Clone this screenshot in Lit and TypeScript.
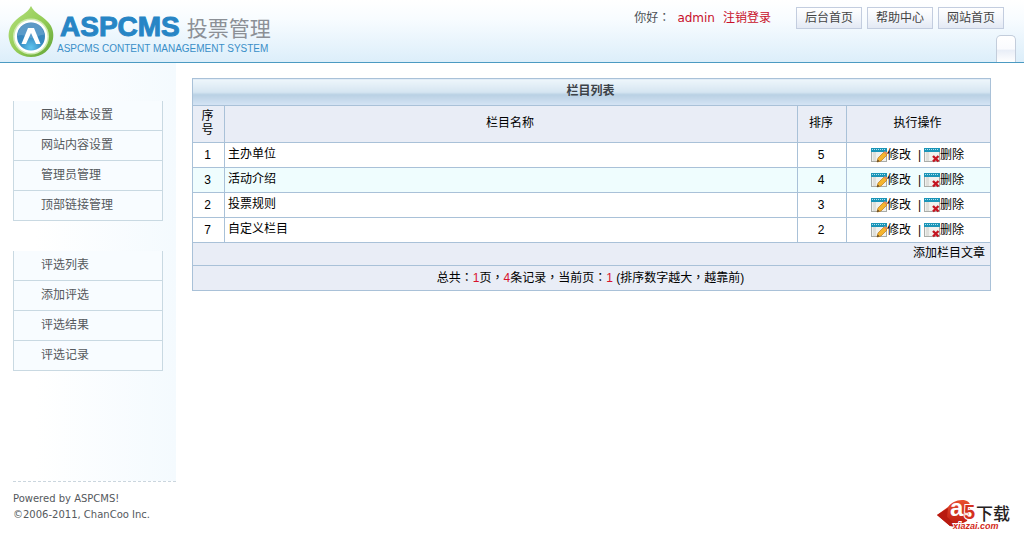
import { LitElement, html, css, svg } from "lit";
import { customElement, property } from "lit/decorators.js";

interface Category {
  id: number;
  name: string;
  order: number;
}

const categories: Category[] = [
  { id: 1, name: "主办单位", order: 5 },
  { id: 3, name: "活动介绍", order: 4 },
  { id: 2, name: "投票规则", order: 3 },
  { id: 7, name: "自定义栏目", order: 2 },
];

const menus: string[][] = [
  ["网站基本设置", "网站内容设置", "管理员管理", "顶部链接管理"],
  ["评选列表", "添加评选", "评选结果", "评选记录"],
];

const windowFrame = svg`
  <rect x="0.5" y="1.5" width="15" height="13" fill="#f0f1ee" stroke="#a9aca8" />
  <rect x="2" y="5" width="3" height="9" fill="#dedfdb" />
  <rect x="0" y="1" width="16" height="4" fill="#1b95b8" />
  <path d="M1 2.5h14" stroke="#b5e4ef" stroke-dasharray="1 1" />`;

@customElement("brand-logo")
class BrandLogo extends LitElement {
  static styles = css`
    :host { display: flex; gap: 3px; }
    .mark { display: block; width: 46px; height: 54px; }
    .name { display: flex; align-items: center; gap: 7px; padding-left: 3px; height: 34px; }
    .words { padding-top: 5px; }
    .product {
      font: bold 28px/34px "Liberation Sans", Arial, sans-serif;
      color: #2785c5;
      -webkit-text-stroke: 1px #2785c5;
    }
    .module { font: 21px/34px "Noto Sans CJK SC", sans-serif; color: #8c9096; }
    .tagline {
      font: 10px/10px "Liberation Sans", Arial, sans-serif;
      color: #3a8fc8;
      white-space: nowrap;
    }
  `;
  render() {
    return html`
      <svg class="mark" viewBox="0 0 46 54" aria-hidden="true">
        <defs>
          <linearGradient id="drop" x1="0" y1="0" x2="1" y2="1">
            <stop offset="0" stop-color="#b4e07c" />
            <stop offset="0.55" stop-color="#92cb55" />
            <stop offset="1" stop-color="#5fa235" />
          </linearGradient>
          <radialGradient id="ball" cx="0.5" cy="0.9" r="0.85">
            <stop offset="0" stop-color="#5fc4ee" />
            <stop offset="0.5" stop-color="#3488c0" />
            <stop offset="1" stop-color="#4284b8" />
          </radialGradient>
        </defs>
        <path d="M23 1C27 9 34 10 40 17C45 22 46 29 45 34C43 45 34 52 23 52S3 45 1 34C0 29 1 22 6 17C12 10 19 9 23 1Z" fill="url(#drop)" />
        <circle cx="23" cy="31.500" r="18" fill="#cfeab0" />
        <circle cx="23" cy="31.500" r="16.500" fill="#fff" />
        <circle cx="23" cy="31.500" r="14" fill="url(#ball)" />
        <path d="M9.500 31C14 28 19 32 23 33S32 29 36.500 30C35 23 31 18 23 17.500C15 18 10 24 9.500 31Z" fill="#8ab8dc" opacity=".4" />
        <path d="M20 23h6L32.500 39H28L23 28l-5 11h-4.500Z" fill="#fff" />
      </svg>
      <div class="words">
        <div class="name">
          <span class="product">ASPCMS</span>
          <span class="module">投票管理</span>
        </div>
        <div class="tagline">ASPCMS CONTENT MANAGEMENT SYSTEM</div>
      </div>
    `;
  }
}

@customElement("category-table")
class CategoryTable extends LitElement {
  @property({ attribute: false }) rows: Category[] = [];
  @property({ type: Number }) active = 3;

  static styles = css`
    :host { display: block; }
    table {
      width: 100%;
      border-collapse: collapse;
      table-layout: fixed;
      font: 12px/14px "Liberation Sans", "Noto Sans CJK SC", sans-serif;
      color: #000;
    }
    .c-id { width: 32px; }
    .c-order { width: 49px; }
    .c-actions { width: 144px; }
    th, td {
      box-sizing: border-box;
      padding: 0 5px 0 3px;
      border: 1px solid #a9c1d8;
      text-align: center;
      font-weight: normal;
    }
    .title {
      height: 27px;
      padding-bottom: 2px;
      font-weight: bold;
      color: #3c4248;
      background: linear-gradient(#eef6fb 0, #d5e5f1 50%, #b9d0e3 58%, #d5e4f5 100%);
    }
    .head th { height: 37px; padding: 0 9px 2px 7px; background: #e9edf6; }
    .row td { height: 25px; }
    .row.active { background: #effdfe; }
    .row .label { padding-bottom: 2px; text-align: left; }
    .tools td { height: 23px; padding-bottom: 2px; text-align: right; background: #e9edf6; }
    .pager td { height: 25px; background: #e9edf6; font-family: "Liberation Sans", "Noto Sans CJK TC", sans-serif; }
    .count { color: #d8122c; }
    a { color: inherit; text-decoration: none; }
    .actions { display: flex; justify-content: center; align-items: center; }
    .action { display: flex; align-items: center; }
    .icon { width: 16px; height: 16px; }
    .bar { padding: 0 3px 0 7px; }
  `;

  render() {
    return html`
      <table>
        <colgroup>
          <col class="c-id" /><col /><col class="c-order" /><col class="c-actions" />
        </colgroup>
        <thead>
          <tr><th class="title" colspan="4">栏目列表</th></tr>
          <tr class="head"><th>序号</th><th>栏目名称</th><th>排序</th><th>执行操作</th></tr>
        </thead>
        <tbody>
          ${this.rows.map(
            (row) => html`
              <tr class="row ${row.id === this.active ? "active" : ""}">
                <td>${row.id}</td>
                <td class="label">${row.name}</td>
                <td>${row.order}</td>
                <td>
                  <div class="actions">
                    <a class="action" href="#edit">
                      <svg class="icon" viewBox="0 0 16 16" aria-hidden="true">
                        ${windowFrame}
                        <path d="M6 15l1-4 6-6 3 3-6 6Z" fill="#f5b52e" stroke="#b9791d" stroke-width=".7" />
                        <path d="M12.500 5.500l1.500-1.500 2 2v1.500Z" fill="#e98b62" />
                        <path d="M6 15l.7-2.500 1.800 1.800Z" fill="#51402a" />
                      </svg>修改</a>
                    <span class="bar">|</span>
                    <a class="action" href="#delete">
                      <svg class="icon" viewBox="0 0 16 16" aria-hidden="true">
                        ${windowFrame}
                        <path d="M9 9l5.500 5.500M14.500 9L9 14.500" stroke="#c41420" stroke-width="2.400" />
                      </svg>删除</a>
                  </div>
                </td>
              </tr>
            `
          )}
        </tbody>
        <tfoot>
          <tr class="tools"><td colspan="4"><a href="#add">添加栏目文章</a></td></tr>
          <tr class="pager">
            <td colspan="4">总共：<span class="count">1</span>页，<span class="count">4</span>条记录，当前页：<span class="count">1</span> (排序数字越大，越靠前)</td>
          </tr>
        </tfoot>
      </table>
    `;
  }
}

@customElement("app-root")
class AppRoot extends LitElement {
  static styles = css`
    :host {
      display: flex;
      flex-direction: column;
      min-height: 100vh;
      position: relative;
      background: #fff;
      font: 12px/14px "DejaVu Sans", "Noto Sans CJK TC", sans-serif;
      color: #4d5257;
    }
    a { color: inherit; text-decoration: none; }
    .header {
      display: flex;
      justify-content: space-between;
      box-sizing: border-box;
      height: 63px;
      padding: 5px 8px 0;
      border-bottom: 1px solid #4b9ac2;
      background: linear-gradient(#fff 0, #f8fcff 30%, #dceefa 100%);
    }
    .right { display: flex; flex-direction: column; align-items: flex-end; justify-content: space-between; }
    .account { display: flex; align-items: center; padding: 2px 12px 0 0; }
    .hello { padding-right: 7px; }
    .user { padding-right: 8px; color: #c8102a; }
    .logout { padding-right: 25px; color: #c8102a; }
    .links { display: flex; gap: 5px; }
    .link {
      box-sizing: border-box;
      width: 66px;
      height: 22px;
      padding: 0 0 2px;
      border: 1px solid #c3cddf;
      background: linear-gradient(#fff, #f3f6fb 50%, #e3e9f4);
      font: 12px/18px "Noto Sans CJK SC", sans-serif;
      color: #444;
    }
    .tab {
      box-sizing: border-box;
      width: 20px;
      height: 27px;
      border: 1px solid #c3cddb;
      border-bottom: 0;
      border-radius: 5px 5px 0 0;
      background: linear-gradient(#fff 0, #fafbfe 50%, #e9eef7 55%, #fff 100%);
    }
    .body { display: flex; flex: 1; }
    .side { display: flex; flex-direction: column; width: 176px; }
    .menus {
      display: flex;
      flex: 1;
      flex-direction: column;
      gap: 30px;
      padding: 38px 13px 0;
      background: linear-gradient(90deg, #fff 20%, #f4fafe);
    }
    .menu { margin: 0; padding: 0; list-style: none; border: 1px solid #c9d9e2; border-width: 0 1px; background: #f8fcff; }
    .item {
      display: block;
      padding: 6px 27px 9px;
      border-bottom: 1px solid #c9d9e2;
      font: 12px/14px "Noto Sans CJK SC", sans-serif;
      color: #55595d;
    }
    .footer {
      height: 55px;
      box-sizing: border-box;
      margin-left: 13px;
      padding-top: 9px;
      border-top: 1px dashed #cbd6de;
      font: 10px/16px "DejaVu Sans", sans-serif;
      color: #55595d;
      white-space: nowrap;
    }
    .main { flex: 1; min-width: 0; padding: 15px 33px 0 16px; }
    .stamp { position: absolute; right: 12px; bottom: 0; width: 76px; height: 44px; }
  `;

  render() {
    return html`
      <header class="header">
        <brand-logo></brand-logo>
        <div class="right">
          <div class="account">
            <span class="hello">你好：</span>
            <span class="user">admin</span>
            <a class="logout" href="#logout">注销登录</a>
            <div class="links">
              <button class="link">后台首页</button>
              <button class="link">帮助中心</button>
              <button class="link">网站首页</button>
            </div>
          </div>
          <div class="tab"></div>
        </div>
      </header>
      <div class="body">
        <aside class="side">
          <nav class="menus">
            ${menus.map(
              (menu) => html`<ul class="menu">
                ${menu.map((item) => html`<li><a class="item" href="#menu">${item}</a></li>`)}
              </ul>`
            )}
          </nav>
          <footer class="footer">Powered by ASPCMS!<br />©2006-2011, ChanCoo Inc.</footer>
        </aside>
        <main class="main"><category-table .rows=${categories}></category-table></main>
      </div>
      <svg class="stamp" viewBox="0 -7 76 44" role="img" aria-label="A5下载">
        <defs>
          <linearGradient id="red" x1="0" y1="0" x2="0" y2="1">
            <stop offset="0" stop-color="#e8502f" />
            <stop offset="1" stop-color="#b91510" />
          </linearGradient>
        </defs>
        <path d="M1 16L12 8C15 4 20 1 26 1C32 1 35 4 34 9L31 22L19 28L14 27Z" fill="url(#red)" />
        <path d="M1 16L12 9L11 18L20 26L14 27Z" fill="#b81a10" />
        <text x="14" y="17" font-family="Liberation Sans" font-weight="bold" font-size="24" fill="#fff">a</text>
        <text x="28" y="20" font-family="Liberation Sans" font-weight="bold" font-size="20" fill="#d5321f" stroke="#fff" stroke-width="2" paint-order="stroke">5</text>
        <text x="40" y="21" font-family="Noto Sans CJK SC" font-weight="500" font-size="17" fill="#26221f">下载</text>
        <text x="17" y="30" font-family="Liberation Sans" font-weight="bold" font-style="italic" font-size="9" fill="#d32a1b" stroke="#fff" stroke-width="2" paint-order="stroke">xiazai.com</text>
      </svg>
    `;
  }
}
